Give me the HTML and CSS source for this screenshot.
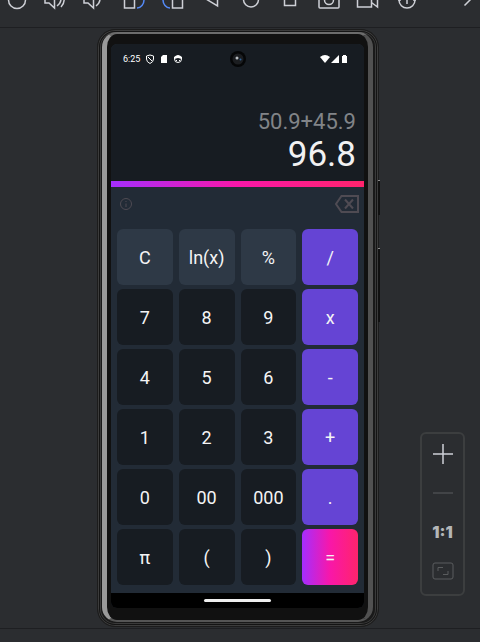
FILE: index.html
```html
<!DOCTYPE html>
<html lang="en">
<head>
<meta charset="utf-8">
<title>Calculator</title>
<link rel="stylesheet" href="styles.css">
</head>
<body>
<header class="toolbar">
  <button class="tool" aria-label="Power"><svg viewBox="0 0 24 24"><circle cx="12" cy="12" r="8.500"/><path d="M12 3v9"/></svg></button>
  <button class="tool" aria-label="Volume up"><svg viewBox="0 0 24 24"><path d="M1 8v7h4l5.500 5V4L5 8zM13 18q4-3 4-7M17 19q4-4 3-10"/></svg></button>
  <button class="tool" aria-label="Volume down"><svg viewBox="0 0 24 24"><path d="M1 8v7h4l5.500 5V4L5 8zM13 18q4-3 4-7"/></svg></button>
  <button class="tool" aria-label="Rotate left"><svg viewBox="0 0 24 24"><path d="M2.500 4.500h10v15.500h-10z"/><path class="accent" d="M15 20c4 0 7-4 7-8V9"/></svg></button>
  <button class="tool" aria-label="Rotate right"><svg viewBox="0 0 24 24"><path d="M11.500 4.500h10v15.500h-10z"/><path class="accent" d="M9 20c-4 0-7-4-7-8V9"/></svg></button>
  <button class="tool" aria-label="Back"><svg viewBox="0 0 24 24"><path d="M17.500 4v14L6 11z"/></svg></button>
  <button class="tool" aria-label="Home"><svg viewBox="0 0 24 24"><circle cx="12" cy="11.500" r="7.500"/></svg></button>
  <button class="tool" aria-label="Overview"><svg viewBox="0 0 24 24"><path d="M6.500 6.500h11v11h-11z"/></svg></button>
  <button class="tool" aria-label="Screenshot"><svg viewBox="0 0 24 24"><path d="M2 6h5l2-2h6l2 2h5v13q0 1-1 1H3q-1 0-1-1z"/><circle cx="12" cy="12" r="4.500"/></svg></button>
  <button class="tool" aria-label="Record"><svg viewBox="0 0 24 24"><path d="M1.500 5h14v14h-14zM15.500 14.500l6 4.500V5l-6 4"/></svg></button>
  <button class="tool" aria-label="Snapshots"><svg viewBox="0 0 24 24"><path d="M4 12a8 8 0 1 0 16 0M12 5v11M6 12H3M21 12h-3"/></svg></button>
  <button class="tool more" aria-label="More"><svg viewBox="0 0 24 24"><path d="M8.500 17.500l6.500-6.500-6-6"/></svg></button>
</header>

<main class="stage">
  <div class="phone">
    <div class="metal">
      <div class="screen">
        <section class="display">
          <div class="status">
            <span class="clock">6:25</span>
            <svg class="mini" viewBox="0 0 10 10"><path class="line" d="M5 1l3.500 1v3Q8.500 8 5 9.500 1.500 8 1.500 5V2zM3 3l4 4"/></svg>
            <svg class="mini" viewBox="0 0 10 10"><path d="M4 1h4v8H2V3z"/></svg>
            <svg class="mini" viewBox="0 0 10 10"><circle class="line" cx="5" cy="5" r="3.500"/><path d="M1 3q4-3 8 0v2L5 4 1 5zM3 6h1v1H3zM6 6h1v1H6z"/></svg>
            <span class="signals">
              <svg class="mini" viewBox="0 0 10 10"><path d="M0 3q5-4 10 0L5 9z"/></svg>
              <svg class="mini" viewBox="0 0 10 10"><path d="M9 1v8H1z"/></svg>
              <svg class="mini battery" viewBox="0 0 10 10"><path d="M2 2h1V1h3v1h1v7H2z"/></svg>
            </span>
            <svg class="camera" viewBox="0 0 16 16"><circle cx="8" cy="8" r="8" fill="#050607"/><circle cx="8" cy="8" r="5.500" fill="#1b1d20"/><circle cx="7" cy="7" r="1.500" fill="#b9bec2"/><circle cx="10.500" cy="8.500" r="1" fill="#31639a"/></svg>
          </div>
          <div class="expression">50.9+45.9</div>
          <output class="result">96.8</output>
        </section>
        <div class="rule"></div>
        <div class="actions">
          <button class="action" aria-label="Information"><svg class="info" viewBox="0 0 14 14"><circle cx="7" cy="7" r="5.500"/><path d="M7 6.500V10M7 4v1"/></svg></button>
          <button class="action" aria-label="Backspace"><svg class="erase" viewBox="0 0 26 20"><path d="M7.500 2H24v16H7.500L2 10zM11 5.500l8 9M19 5.500l-8 9"/></svg></button>
        </div>
        <div class="keys">
          <button class="key soft">C</button><button class="key soft">ln(x)</button><button class="key soft">%</button><button class="key op">/</button>
          <button class="key">7</button><button class="key">8</button><button class="key">9</button><button class="key op">x</button>
          <button class="key">4</button><button class="key">5</button><button class="key">6</button><button class="key op">-</button>
          <button class="key">1</button><button class="key">2</button><button class="key">3</button><button class="key op">+</button>
          <button class="key">0</button><button class="key">00</button><button class="key">000</button><button class="key op">.</button>
          <button class="key">π</button><button class="key">(</button><button class="key">)</button><button class="key equals">=</button>
        </div>
        <div class="nav"><div class="handle"></div></div>
      </div>
    </div>
    <span class="side power"></span>
    <span class="side volume"></span>
  </div>

  <aside class="zoom">
    <button aria-label="Zoom in"><svg viewBox="0 0 24 24"><path class="bright" d="M2 12h20M12 2v20"/></svg></button>
    <button aria-label="Zoom out"><svg viewBox="0 0 24 24"><path d="M2 12h20"/></svg></button>
    <button class="ratio">1:1</button>
    <button aria-label="Zoom to fit"><svg viewBox="0 0 24 24"><rect x="2" y="4" width="20" height="16" rx="2"/><path d="M7 12V8.500h5M12 15.500h5V12"/></svg></button>
  </aside>
</main>
<footer class="bottom"></footer>
</body>
</html>
```

FILE: styles.css
```css
* { box-sizing: border-box; }

body {
  margin: 0;
  min-height: 100vh;
  display: flex;
  flex-direction: column;
  overflow: hidden;
  background: #2b2d30;
  font-family: Roboto, sans-serif;
}

button {
  padding: 0;
  border: 0;
  background: none;
  color: inherit;
  font: inherit;
}

svg { display: block; }

/* Emulator toolbar, partly scrolled under the window's top edge */
.toolbar {
  display: flex;
  gap: 15px;
  margin-top: -12px;
  padding: 0 1px 15px 5px;
  border-bottom: 1px solid #1e1f22;
}

.tool svg {
  width: 24px;
  height: 24px;
  fill: none;
  stroke: #ced0d6;
  stroke-width: 1.5;
}

.tool .accent { stroke: #548af7; }
.more { margin-left: auto; margin-right: -1px; }

.stage {
  position: relative;
  display: flex;
  justify-content: center;
  padding: 1px 4px 1px 0;
}

/* Device frame */
.phone {
  position: relative;
  width: 282px;
  padding: 2px 5px 4px 4px;
  border: 1px solid #1c1c1c;
  border-radius: 18px;
  background: #191919;
  box-shadow: inset 0 0 0 1px #3c3c3c, inset 0 0 0 2px #141414, inset 0 0 0 3px #3a3a3a;
}

.metal {
  padding: 10px 4px 12px;
  border: solid;
  border-width: 2px 5px 2px 5px;
  border-color: #6c6c6c #515151 #555555 #999999;
  border-radius: 15px;
  background: #111111;
}

.screen {
  overflow: hidden;
  border-radius: 6px;
  background: #222b36;
}

.side {
  position: absolute;
  right: -2px;
  width: 2px;
  background: #111111;
  border-top: 1px solid #888888;
}

.power { top: 150px; height: 35px; }
.volume { top: 218px; height: 74px; }

/* Calculator display */
.display {
  display: flex;
  flex-direction: column;
  align-items: flex-end;
  padding: 7px 8px 6px;
  background: #171c22;
}

.status {
  position: relative;
  display: flex;
  align-self: stretch;
  align-items: center;
  gap: 4px;
  height: 16px;
  margin-bottom: 42px;
  padding: 0 6px 0 4px;
  color: #ffffff;
  font-size: 9px;
}

.clock { margin-right: 1px; }

.mini {
  width: 10px;
  height: 10px;
  fill: #ffffff;
}

.mini .line { fill: none; stroke: #ffffff; }
.signals { display: flex; margin-left: auto; }

.camera {
  position: absolute;
  left: 50%;
  width: 16px;
  height: 16px;
  margin-left: -8px;
}

.expression {
  color: #818488;
  font-size: 22px;
  line-height: 26px;
}

.result {
  color: #f1f1f2;
  font-size: 35px;
  line-height: 40px;
}

.rule {
  height: 6px;
  background: linear-gradient(90deg, #a42eff, #f817a9 50%, #ff246c);
}

.actions {
  display: flex;
  justify-content: space-between;
  align-items: center;
  height: 34px;
  margin-bottom: 8px;
  padding: 0 4px 0 8px;
}

.action svg {
  fill: none;
  stroke: #4f4b53;
}

.info { width: 14px; height: 14px; }
.erase { width: 26px; height: 20px; stroke-width: 2; }

.keys {
  display: grid;
  grid-template-columns: repeat(4, 1fr);
  grid-auto-rows: 56px;
  gap: 4px 6px;
  padding: 0 6px 8px;
}

.key {
  border-radius: 6px;
  background: #171c22;
  color: #f4f4f5;
  font-size: 18px;
}

.soft { background: #2e3946; }
.op { background: #6544d4; }
.equals { background: linear-gradient(90deg, #a42eff, #f817a9 50%, #ff246c); }

.nav {
  display: flex;
  justify-content: center;
  align-items: center;
  height: 15px;
  background: #000000;
}

.handle {
  width: 67px;
  height: 3px;
  border-radius: 2px;
  background: #eeeeee;
}

/* Floating zoom controls */
.zoom {
  position: absolute;
  right: 15px;
  bottom: 32px;
  display: flex;
  flex-direction: column;
  align-items: center;
  gap: 15px;
  width: 45px;
  padding: 8px 0 11px;
  border: 2px solid #3c3e3f;
  border-radius: 6px;
  color: #b4b6b8;
}

.zoom svg {
  width: 24px;
  height: 24px;
  fill: none;
  stroke: #5a5c5e;
}

.zoom .bright { stroke: #ced0d6; stroke-width: 1.5; }

.ratio {
  height: 24px;
  font-family: Inter, sans-serif;
  font-size: 16px;
  font-weight: 900;
}

.bottom {
  flex: 1;
  border-top: 1px solid #1e1f22;
}
```
